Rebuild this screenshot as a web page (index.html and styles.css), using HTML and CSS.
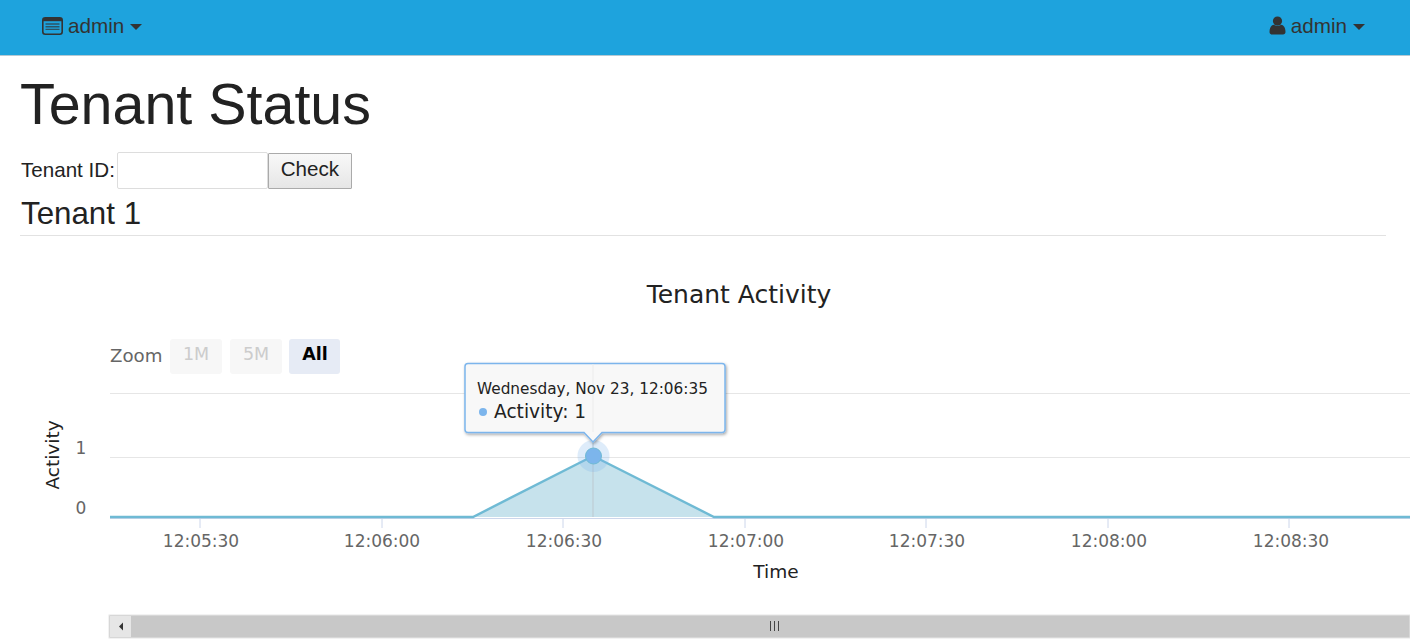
FILE: index.html
```html
<!DOCTYPE html>
<html lang="en">
<head>
    <meta charset="UTF-8">
    <meta name="viewport" content="width=device-width, initial-scale=1.0">
    <title>Tenant Status</title>
    <link rel="stylesheet" href="styles.css">
</head>
<body>
    <div class="navbar">
        <a class="nav-item" href="#">
            <svg class="nav-icon" width="21" height="18" viewBox="0 0 21 18">
                <rect x="0.8" y="0.8" width="19.4" height="16.4" rx="2.5" fill="none" stroke="#333" stroke-width="1.6"/>
                <rect x="1" y="1" width="19" height="3.2" fill="#333"/>
                <path d="M3.5 7H17.5M3.5 9.7H17.5M3.5 12.4H17.5" stroke="#333" stroke-width="1.4" opacity="0.7"/>
            </svg>
            admin
            <span class="caret"></span>
        </a>
        <a class="nav-item" href="#">
            <svg class="nav-icon" width="17" height="19" viewBox="0 0 17 19">
                <circle cx="8.5" cy="5" r="4.6" fill="#333"/>
                <path d="M0.5 16 C0.5 11.5 2.5 9 5 8.8 C6.5 10.2 10.5 10.2 12 8.8 C14.5 9 16.5 11.5 16.5 16 C16.5 17.6 15.5 18.5 14 18.5 L3 18.5 C1.5 18.5 0.5 17.6 0.5 16 Z" fill="#333"/>
            </svg>
            admin
            <span class="caret"></span>
        </a>
    </div>

    <div class="content">
        <h1>Tenant Status</h1>
        <form class="tenant-form">
            <label for="tenantId">Tenant ID:</label>
            <input type="text" id="tenantId" name="tenantId">
            <button type="button">Check</button>
        </form>
        <h2>Tenant 1</h2>
    </div>

    <!-- chart coordinates are page coordinates, the viewBox starts where the svg starts -->
    <svg class="chart" width="1410" height="408" viewBox="0 236 1410 408">
        <defs>
            <filter id="tipShadow" x="-5%" y="-10%" width="110%" height="125%">
                <feDropShadow dx="1" dy="1.5" stdDeviation="1.5" flood-color="#000" flood-opacity="0.35"/>
            </filter>
        </defs>

        <text class="chart-title" x="739" y="303">Tenant Activity</text>

        <text class="zoom-label" x="110" y="362">Zoom</text>
        <rect class="range-btn" x="170" y="339" width="52" height="35" rx="3"/>
        <text class="range-text" x="196" y="360">1M</text>
        <rect class="range-btn" x="230" y="339" width="52" height="35" rx="3"/>
        <text class="range-text" x="256" y="360">5M</text>
        <rect class="range-btn active" x="289" y="339" width="51" height="35" rx="3"/>
        <text class="range-text active" x="315" y="360">All</text>

        <line class="grid" x1="110" y1="393.5" x2="1410" y2="393.5"/>
        <line class="grid" x1="110" y1="457.5" x2="1410" y2="457.5"/>

        <text class="y-label" x="81" y="454">1</text>
        <text class="y-label" x="81" y="514">0</text>
        <text class="axis-title" transform="translate(59 455) rotate(-90)">Activity</text>

        <line class="axis" x1="110" y1="518.5" x2="1410" y2="518.5"/>
        <path class="tick" d="M200 519V528M382 519V528M563 519V528M745 519V528M926 519V528M1108 519V528M1289 519V528"/>
        <text class="x-label" x="201" y="547">12:05:30</text>
        <text class="x-label" x="382" y="547">12:06:00</text>
        <text class="x-label" x="564" y="547">12:06:30</text>
        <text class="x-label" x="746" y="547">12:07:00</text>
        <text class="x-label" x="927" y="547">12:07:30</text>
        <text class="x-label" x="1109" y="547">12:08:00</text>
        <text class="x-label" x="1291" y="547">12:08:30</text>
        <text class="axis-title" x="776" y="578">Time</text>

        <path class="area" d="M473 517L593 456L714 517Z"/>
        <line class="crosshair" x1="593" y1="363" x2="593" y2="517"/>
        <path class="series" d="M110 517H473L593 456L714 517H1410"/>
        <circle class="halo" cx="593.5" cy="456" r="16"/>
        <circle class="marker" cx="593.5" cy="456" r="8"/>

        <path class="tooltip" filter="url(#tipShadow)" d="M468 363.5H722a3 3 0 0 1 3 3V429.5a3 3 0 0 1 -3 3H602L593 442L584 432.5H468a3 3 0 0 1 -3 -3V366.5a3 3 0 0 1 3 -3Z"/>
        <line class="crosshair faint" x1="593" y1="364" x2="593" y2="432"/>
        <text class="tip-date" x="477" y="394">Wednesday, Nov 23, 12:06:35</text>
        <circle class="tip-dot" cx="483" cy="412" r="4"/>
        <text class="tip-value" x="494" y="418">Activity: <tspan class="tip-num">1</tspan></text>

        <rect class="scroll-track" x="109" y="615" width="1301" height="23"/>
        <rect class="scroll-btn" x="110" y="616" width="21" height="21"/>
        <path class="scroll-arrow" d="M119 626.5L123 622.5V630.5Z"/>
        <path class="scroll-grip" d="M770.5 621V631M774.5 621V631M778.5 621V631"/>
    </svg>
</body>
</html>
```

FILE: styles.css
```css
body {
    font-family: "Liberation Sans", Arial, sans-serif;
    background-color: #fff;
    color: #222;
    margin: 0;
    padding: 0;
    overflow: hidden;
}

.navbar {
    display: flex;
    justify-content: space-between;
    align-items: center;
    height: 51px;
    padding: 0 45px 4px 42px;
    background-color: #1ea3dd;
    border-bottom: 1px solid #b5c9d3;
}

.nav-item {
    display: flex;
    align-items: center;
    gap: 5px;
    color: #333;
    font-size: 20.7px;
    text-decoration: none;
}

.caret {
    margin-left: 1px;
    margin-top: 3px;
    border-top: 6px solid #333;
    border-left: 6px solid transparent;
    border-right: 6px solid transparent;
}

.content {
    padding: 0 24px 0 20px;
}

h1 {
    margin: 0;
    padding-top: 15px;
    font-size: 57.4px;
    font-weight: 400;
    line-height: 66px;
}

.tenant-form {
    display: flex;
    align-items: center;
    margin-top: 15px;
    height: 37px;
    font-size: 20.6px;
}

.tenant-form label {
    margin-left: 1px;
    margin-right: 2px;
    padding-bottom: 2px;
}

.tenant-form input {
    box-sizing: border-box;
    width: 151px;
    height: 37px;
    padding: 0 8px;
    border: 1px solid #ddd;
    border-radius: 2px;
    background-color: #fff;
}

.tenant-form button {
    box-sizing: border-box;
    width: 84px;
    height: 36px;
    padding: 0 0 4px;
    border: 1px solid #aaa;
    border-radius: 1px;
    background: linear-gradient(#f8f8f8, #e6e6e6);
    color: #222;
    font-family: inherit;
    font-size: 20.6px;
}

h2 {
    margin: 0;
    padding: 8px 0 4px 1px;
    border-bottom: 1px solid #e2e2e2;
    font-size: 31.3px;
    font-weight: 400;
    line-height: 34px;
}

.chart {
    display: block;
    font-family: "DejaVu Sans", Verdana, sans-serif;
}

.chart-title {
    font-size: 25px;
    fill: #222;
    text-anchor: middle;
}

.zoom-label {
    font-size: 18.2px;
    fill: #666;
}

.range-btn {
    fill: #f7f7f7;
}

.range-btn.active {
    fill: #e6ebf5;
}

.range-text {
    font-size: 17.5px;
    fill: #ccc;
    text-anchor: middle;
}

.range-text.active {
    fill: #000;
    font-weight: 700;
}

.grid {
    stroke: #e6e6e6;
    stroke-width: 1;
}

.axis {
    stroke: #ccd6eb;
    stroke-width: 1;
}

.tick {
    stroke: #ccd6eb;
    stroke-width: 1;
    fill: none;
}

.y-label {
    font-size: 17px;
    fill: #666;
    text-anchor: middle;
}

.x-label {
    font-size: 17px;
    fill: #666;
    text-anchor: middle;
}

.axis-title {
    font-size: 18.5px;
    fill: #222;
    text-anchor: middle;
}

.area {
    fill: #c6e2ec;
}

.crosshair {
    stroke: #bcc8cf;
    stroke-width: 1;
}

.crosshair.faint {
    stroke: #ececec;
}

.series {
    fill: none;
    stroke: #6fbad4;
    stroke-width: 2.4;
}

.halo {
    fill: #7cb5ec;
    opacity: 0.25;
}

.marker {
    fill: #7cb5ec;
    stroke: #6fbad4;
    stroke-width: 1;
}

.tooltip {
    fill: #f8f8f8;
    stroke: #7cb5ec;
    stroke-width: 1.5;
}

.tip-date {
    font-size: 15.3px;
    fill: #222;
}

.tip-dot {
    fill: #7cb5ec;
}

.tip-value {
    font-size: 18.6px;
    fill: #222;
}

.tip-num {
    font-weight: 400;
}

.scroll-track {
    fill: #c8c8c8;
    stroke: #e6e6e6;
    stroke-width: 1;
}

.scroll-btn {
    fill: #e6e6e6;
}

.scroll-arrow {
    fill: #333;
}

.scroll-grip {
    stroke: #444;
    stroke-width: 1;
    fill: none;
}
```
